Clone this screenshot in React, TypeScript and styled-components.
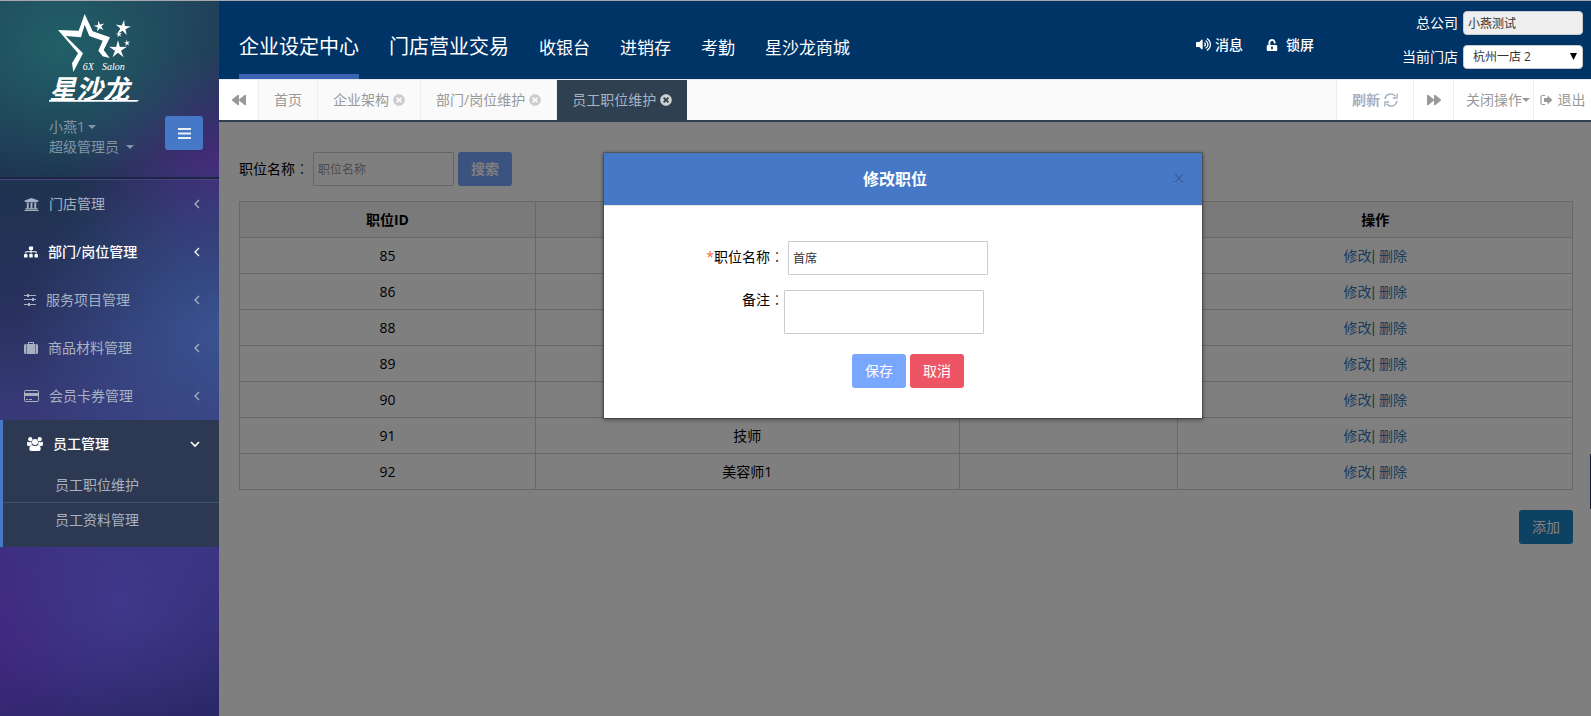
import React from 'react';
import styled, { createGlobalStyle, css } from 'styled-components';
import { FaBackward, FaForward, FaTimesCircle, FaVolumeUp, FaUnlockAlt, FaUniversity, FaSitemap } from 'react-icons/fa';

const GlobalStyle = createGlobalStyle`
  * { box-sizing: border-box; }
  body {
    margin: 0;
    font-family: 'Open Sans', 'Noto Sans CJK SC', sans-serif;
    font-size: 14px;
    line-height: 20px;
    color: #000;
    background: #fff;
  }
  button, input, select, textarea { font: inherit; }
  a { text-decoration: none; }
  svg { display: block; flex: none; }
`;

const Page = styled.div`
  display: flex;
  min-height: 100vh;
  border-top: 1px solid #a6a8ab;
`;

/* ---------- sidebar ---------- */

const Sidebar = styled.aside`
  width: 219px;
  flex: none;
  background:
    radial-gradient(ellipse 200px 180px at 100% 46%, rgba(60, 86, 152, 0.9), rgba(60, 86, 152, 0) 100%),
    radial-gradient(ellipse 140px 130px at 55% 84%, rgba(66, 58, 142, 0.8), rgba(66, 58, 142, 0) 100%),
    radial-gradient(ellipse 150px 120px at 100% 23%, rgba(76, 40, 128, 0.85), rgba(76, 40, 128, 0) 100%),
    radial-gradient(ellipse 150px 160px at 0% 88%, rgba(68, 38, 130, 0.8), rgba(68, 38, 130, 0) 100%),
    linear-gradient(180deg, #21405a 0%, #1e3450 25%, #28305c 42%, #383a78 58%, #3a3482 75%, #2b2868 100%);
`;

const Profile = styled.div`
  padding: 7px 16px 20px 44px;
  border-bottom: 2px solid #1d2447;
  background:
    radial-gradient(ellipse 170px 140px at 28% 26%, rgba(33, 98, 104, 0.95), rgba(33, 98, 104, 0) 100%);
`;

const Account = styled.div`
  display: flex;
  justify-content: space-between;
  align-items: flex-start;
  padding: 10px 0 0 5px;
`;

const AccountLinks = styled.div`
  display: flex;
  flex-direction: column;
  align-items: flex-start;
  padding-top: 1px;
`;

const AccountLink = styled.a<{ $gap: number }>`
  display: flex;
  align-items: center;
  gap: ${p => p.$gap}px;
  color: #8095a8;
`;

const Caret = styled.span`
  border: 4px solid transparent;
  border-top-color: currentColor;
  border-bottom: 0;
`;

const MenuButton = styled.button`
  display: grid;
  place-items: center;
  width: 38px;
  height: 34px;
  padding: 0;
  border: 0;
  border-radius: 3px;
  color: #e8eefa;
  background: #4678c8;
`;

const Menu = styled.nav`
  border-top: 1px solid #44477a;
`;

const MenuGroup = styled.div<{ $open?: boolean }>`
  ${p => p.$open && css`
    padding-bottom: 10px;
    border-left: 3px solid #4678c8;
    background: #2d3953;
  `}
`;

const MenuLink = styled.a<{ $bright?: boolean }>`
  display: flex;
  align-items: center;
  gap: 10px;
  height: 48px;
  padding: 0 19px 0 24px;
  color: ${p => (p.$bright ? '#fff' : '#a7b1c2')};
  font-weight: ${p => (p.$bright ? 500 : 400)};
  & > :last-child { margin-left: auto; }
`;

const SubLink = styled.a`
  display: block;
  padding: 7px 0 7px 52px;
  color: #a7b1c2;
  & + & { border-top: 1px solid #40506a; }
`;

/* ---------- header ---------- */

const Main = styled.div`
  flex: 1;
  min-width: 0;
  display: flex;
  flex-direction: column;
`;

const Header = styled.header`
  display: flex;
  justify-content: space-between;
  padding: 0 8px 0 20px;
  background: #003366;
`;

const TopNav = styled.nav`
  display: flex;
  align-items: flex-end;
  gap: 30px;
`;

const TopLink = styled.a<{ $large?: boolean; $active?: boolean }>`
  padding-bottom: ${p => (p.$large ? 14 : 13)}px;
  border-bottom: 5px solid ${p => (p.$active ? '#3c64b4' : 'transparent')};
  color: #fff;
  font-size: ${p => (p.$large ? 20 : 17)}px;
  line-height: 26px;
  white-space: nowrap;
`;

const HeaderSide = styled.div`
  display: flex;
  gap: 88px;
`;

const Tools = styled.div`
  display: flex;
  gap: 23px;
  align-items: center;
  padding: 9px 0 0;
`;

const Tool = styled.a<{ $gap: number }>`
  display: flex;
  align-items: center;
  gap: ${p => p.$gap}px;
  color: #fff;
  font-weight: 500;
  white-space: nowrap;
`;

const Company = styled.div`
  display: grid;
  grid-template-columns: auto 120px;
  gap: 10px 5px;
  align-items: center;
  justify-items: end;
  padding: 10px 0;
  color: #fff;
`;

const companyField = css`
  width: 120px;
  height: 24px;
  border: 1px solid #c8ccd2;
  border-radius: 4px;
  font-size: 12px;
  line-height: 16px;
  color: #333;
`;

const CompanyInput = styled.input`
  ${companyField}
  padding: 2px 4px;
  background: #eee;
`;

const SelectBox = styled.span`
  position: relative;
  display: flex;
  svg { position: absolute; right: 6px; top: 8px; }
`;

const CompanySelect = styled.select`
  ${companyField}
  appearance: none;
  padding: 2px 9px;
  background: #fff;
`;

/* ---------- tab strip ---------- */

const TabBar = styled.div`
  display: flex;
  height: 43px;
  border-top: 1px solid #e7eaec;
  border-bottom: 2px solid #2f4050;
  background: #fafafa;
`;

const TabList = styled.div`
  display: flex;
  flex: 1;
  min-width: 0;
`;

const Tab = styled.div<{ $active?: boolean }>`
  display: flex;
  align-items: center;
  gap: 4px;
  padding: 0 15px;
  border-right: ${p => (p.$active ? 0 : 1)}px solid #eee;
  color: ${p => (p.$active ? '#a7b1c2' : '#999')};
  background: ${p => (p.$active ? '#2f4050' : 'transparent')};
  white-space: nowrap;
  a { color: inherit; }
`;

const TabClose = styled.button<{ $active?: boolean }>`
  padding: 0;
  border: 0;
  background: none;
  color: ${p => (p.$active ? '#d0d0d0' : '#ccc')};
`;

const BarButton = styled.button<{ $width: number; $gap?: number; $bold?: boolean; $side?: 'right'; $end?: boolean }>`
  display: flex;
  align-items: center;
  justify-content: ${p => (p.$end ? 'flex-end' : 'center')};
  gap: ${p => p.$gap ?? 0}px;
  width: ${p => p.$width}px;
  padding: 0 ${p => (p.$end ? 3 : 0)}px 0 0;
  border: 0 solid #eee;
  border-width: ${p => (p.$side ? '0 1px 0 0' : '0 0 0 1px')};
  background: #fff;
  color: ${p => (p.$bold ? '#a7b1c2' : '#999')};
  font-weight: ${p => (p.$bold ? 700 : 400)};
  white-space: nowrap;
`;

/* ---------- content ---------- */

const Content = styled.main`
  position: relative;
  flex: 1;
  padding: 30px 18px 30px 20px;
`;

const SearchForm = styled.form`
  display: flex;
  align-items: center;
  gap: 4px;
  margin-bottom: 15px;
`;

const Colon = styled.span`
  font-family: 'Noto Sans CJK JP', sans-serif;
  font-weight: 300;
  line-height: 1;
`;

const fieldStyle = css`
  border: 1px solid #ccc;
  border-radius: 1px;
  padding: 6px 4px;
  font-size: 12px;
  color: #333;
  background: #fff;
`;

const SearchInput = styled.input`
  ${fieldStyle}
  width: 141px;
  height: 34px;
  &::placeholder { color: #999; opacity: 1; }
`;

const Button = styled.button<{ $color: string; $bold?: boolean }>`
  width: 54px;
  height: 34px;
  padding: 0;
  border: 0;
  border-radius: 3px;
  color: #fff;
  background: ${p => p.$color};
  font-weight: ${p => (p.$bold ? 700 : 400)};
`;

const Table = styled.table`
  width: 100%;
  border-collapse: collapse;
  table-layout: fixed;
  text-align: center;
  th, td { height: 36px; padding: 0; border: 1px solid #d0d0d0; }
  th { background: #f5f5f6; font-weight: 700; }
  td a { color: #337ab7; }
`;

const Col = styled.col<{ $share: number }>`
  width: ${p => p.$share}%;
`;

const RowActions = styled.td`
  font-family: 'Liberation Sans', 'Noto Sans CJK SC', sans-serif;
  color: #676a6c;
`;

const Footer = styled.div`
  display: flex;
  justify-content: flex-end;
  padding-top: 20px;
`;

/* ---------- dialog ---------- */

const Backdrop = styled.div`
  position: absolute;
  inset: 0;
  display: flex;
  justify-content: center;
  align-items: flex-start;
  padding: 30px 4px 0 0;
  background: rgba(0, 0, 0, 0.5);
`;

const Dialog = styled.section`
  width: 600px;
  border: 1px solid rgba(0, 0, 0, 0.2);
  background: #fff;
  background-clip: padding-box;
  box-shadow: 0 1px 4px rgba(0, 0, 0, 0.4);
`;

const DialogHeader = styled.div`
  display: flex;
  align-items: center;
  padding: 13px 15px;
  border-bottom: 1px solid #e5e5e5;
  background: #4678c8;
`;

const DialogTitle = styled.h4`
  flex: 1;
  margin: 0;
  color: #fff;
  font-size: 16px;
  line-height: 26px;
  text-align: center;
`;

const DialogClose = styled.button`
  display: grid;
  place-items: center;
  width: 16px;
  padding: 0;
  border: 0;
  background: none;
  color: #3860a0;
`;

const DialogForm = styled.form`
  padding: 35px 0 30px;
`;

const FormRow = styled.div<{ $inset?: boolean }>`
  display: flex;
  align-items: flex-start;
  gap: ${p => (p.$inset ? 4 : 0)}px;
  margin-bottom: ${p => (p.$inset ? 15 : 20)}px;
  label {
    width: 180px;
    padding-top: ${p => (p.$inset ? 6 : 0)}px;
    text-align: right;
  }
`;

const Required = styled.span`
  color: #f64;
`;

const NameInput = styled.input`
  ${fieldStyle}
  width: 200px;
  height: 34px;
`;

const NoteArea = styled.textarea`
  ${fieldStyle}
  width: 200px;
  height: 44px;
  resize: none;
`;

const Actions = styled.div`
  display: flex;
  gap: 4px;
  padding-left: 248px;
`;

const SideHandle = styled.div`
  position: absolute;
  right: 0;
  top: 332px;
  width: 1px;
  height: 55px;
  background: #1c1c30;
`;

/* ---------- drawings ---------- */

const starPoints = (cx: number, cy: number, r: number, turn: number) =>
  Array.from({ length: 10 }, (_, i) => {
    const a = ((i * 36 - 90 + turn) * Math.PI) / 180;
    const d = i % 2 ? r * 0.34 : r;
    return `${(cx + d * Math.cos(a)).toFixed(1)},${(cy + d * Math.sin(a)).toFixed(1)}`;
  }).join(' ');

const Logo = () => (
  <svg width="100" height="98" viewBox="132 24 300 294" fill="#fff" role="img" aria-label="6X Salon">
    <path d="M174 90L236 92L254 42L278 94L330 112L311 150L329 174L308 169L295 152L308 122L268 108L254 74L243 112L197 108L249 160L220 216L216 190L234 160Z" />
    <polygon points={starPoints(298, 79, 17, -12)} />
    <polygon points={starPoints(369, 84, 24, 8)} />
    <polygon points={starPoints(357, 103, 10, -8)} />
    <polygon points={starPoints(381, 129, 10, -8)} />
    <polygon points={starPoints(354, 149, 28, 0)} />
    <text x="248" y="210" fontSize="30" fontStyle="italic" fontFamily="Liberation Serif, serif">6X</text>
    <text x="306" y="210" fontSize="30" fontStyle="italic" fontFamily="Liberation Serif, serif">Salon</text>
    <text x="148" y="298" fontSize="80" fontWeight="700" fontStyle="italic" fontFamily="Liberation Sans, Noto Sans CJK SC, sans-serif">星沙龙</text>
    <path d="M147 300H417L411 305H147Z" />
  </svg>
);

const SlidersIcon = () => (
  <svg width="12" height="14" viewBox="0 0 12 14" fill="currentColor">
    <path d="M0 2h2v1H0zM6 2h6v1H6zM0 6h7v1H0zM11 6h1v1h-1zM0 11h3v1H0zM7 11h5v1H7z" />
    <path d="M3 1h2v3H3zM8 5h2v3H8zM4 10h2v3H4z" />
    <path d="M2 2h4v1H2zM7 6h4v1H7zM3 11h4v1H3z" />
  </svg>
);

const SuitcaseIcon = () => (
  <svg width="14" height="14" viewBox="0 0 14 14" fill="currentColor">
    <path d="M0 4.500Q0 3 1.500 3H2V13H1.500Q0 13 0 11.500zM2.500 3H4V1.700Q4 1 4.700 1H9.300Q10 1 10 1.700V3H11.500V13H2.500zM5 2V3H9V2zM12 3H12.500Q14 3 14 4.500V11.500Q14 13 12.500 13H12z" />
  </svg>
);

const CardIcon = () => (
  <svg width="15" height="14" viewBox="0 0 15 14">
    <rect x="0.500" y="1.500" width="14" height="11" rx="0.800" fill="none" stroke="currentColor" />
    <path d="M1 4H14V7H1zM2 10h2v1H2zM5 10h3v1H5z" fill="currentColor" />
  </svg>
);

const UsersIcon = () => (
  <svg width="16" height="14" viewBox="0 0 16 14" fill="currentColor">
    <circle cx="3.300" cy="2.200" r="2.100" />
    <circle cx="12.700" cy="2.200" r="2.100" />
    <path d="M0.500 4.500Q3 6 4.600 4.200Q4.300 6.600 5 7.500Q3.800 8 3 9H1.600Q0 9 0 7.500Q0 5.500 0.500 4.500zM15.500 4.500Q13 6 11.400 4.200Q11.700 6.600 11 7.500Q12.200 8 13 9H14.400Q16 9 16 7.500Q16 5.500 15.500 4.500z" />
    <circle cx="8" cy="4.900" r="3" />
    <path d="M4.800 8Q8 10 11.200 8Q13.700 8.500 13.700 12Q13.700 14 12 14H4Q2.300 14 2.300 12Q2.300 8.500 4.800 8z" />
  </svg>
);

const Angle = ({ down }: { down?: boolean }) => (
  <svg width={down ? 10 : 6} height="10" viewBox={down ? '0 0 10 10' : '0 0 6 10'} fill="none" stroke="currentColor" strokeWidth={down ? 1.6 : 1.3}>
    <path d={down ? 'M1 3L5 7L9 3' : 'M5 1L1 5L5 9'} />
  </svg>
);

const BarsIcon = () => (
  <svg width="13" height="11" viewBox="0 0 13 11" fill="currentColor">
    <path d="M0 0h13v2H0zM0 4.500h13v2H0zM0 9h13v2H0z" />
  </svg>
);

const RefreshIcon = () => (
  <svg width="14" height="14" viewBox="0 0 14 14" fill="none" stroke="currentColor" strokeWidth="1.500">
    <path d="M1 6Q1.500 2.500 5 1.300Q8.800 0.300 11.500 3.300M13 8Q12.500 11.500 9 12.700Q5.200 13.700 2.500 10.700" />
    <path d="M13.200 0.500V5H8.800M0.800 13.500V9H5.200" strokeWidth="1.300" />
  </svg>
);

const SignOutIcon = () => (
  <svg width="13" height="12" viewBox="0 0 13 12">
    <path d="M5 1.500H2.500Q1 1.500 1 3V9Q1 10.500 2.500 10.500H5" fill="none" stroke="currentColor" strokeWidth="1.200" />
    <path d="M4 4H7.500V1.500L12.500 6L7.500 10.500V8H4z" fill="currentColor" />
  </svg>
);

const CrossIcon = () => (
  <svg width="10" height="12" viewBox="0 0 10 12" fill="none" strokeWidth="1.800">
    <path d="M1 2L9 11M9 2L1 11" stroke="#7c9fd8" strokeWidth="1" />
    <path d="M1 1L9 10M9 1L1 10" stroke="currentColor" />
  </svg>
);

/* ---------- data ---------- */

const menuItems = [
  { label: '门店管理', icon: <FaUniversity size={15} /> },
  { label: '部门/岗位管理', icon: <FaSitemap size={14} />, bright: true },
  { label: '服务项目管理', icon: <SlidersIcon /> },
  { label: '商品材料管理', icon: <SuitcaseIcon /> },
  { label: '会员卡券管理', icon: <CardIcon /> },
];

const topLinks = [
  { label: '企业设定中心', large: true, active: true },
  { label: '门店营业交易', large: true },
  { label: '收银台' },
  { label: '进销存' },
  { label: '考勤' },
  { label: '星沙龙商城' },
];

const tabs = [
  { label: '首页' },
  { label: '企业架构', closable: true },
  { label: '部门/岗位维护', closable: true },
  { label: '员工职位维护', closable: true, active: true },
];

const positions = [
  { id: 85, name: '' },
  { id: 86, name: '' },
  { id: 88, name: '' },
  { id: 89, name: '' },
  { id: 90, name: '' },
  { id: 91, name: '技师' },
  { id: 92, name: '美容师1' },
];

export default function App() {
  return (
    <Page>
      <GlobalStyle />
      <Sidebar>
        <Profile>
          <Logo />
          <Account>
            <AccountLinks>
              <AccountLink href="#" $gap={3}>小燕1<Caret /></AccountLink>
              <AccountLink href="#" $gap={7}>超级管理员<Caret /></AccountLink>
            </AccountLinks>
            <MenuButton type="button"><BarsIcon /></MenuButton>
          </Account>
        </Profile>
        <Menu>
          {menuItems.map(item => (
            <MenuLink key={item.label} href="#" $bright={item.bright}>
              {item.icon}
              <span>{item.label}</span>
              <Angle />
            </MenuLink>
          ))}
          <MenuGroup $open>
            <MenuLink href="#" $bright>
              <UsersIcon />
              <span>员工管理</span>
              <Angle down />
            </MenuLink>
            <SubLink href="#">员工职位维护</SubLink>
            <SubLink href="#">员工资料管理</SubLink>
          </MenuGroup>
        </Menu>
      </Sidebar>

      <Main>
        <Header>
          <TopNav>
            {topLinks.map(l => (
              <TopLink key={l.label} href="#" $large={l.large} $active={l.active}>{l.label}</TopLink>
            ))}
          </TopNav>
          <HeaderSide>
            <Tools>
              <Tool href="#" $gap={4}><FaVolumeUp size={15} />消息</Tool>
              <Tool href="#" $gap={8}><FaUnlockAlt size={12} />锁屏</Tool>
            </Tools>
            <Company>
              <label htmlFor="company">总公司</label>
              <CompanyInput id="company" defaultValue="小燕测试" readOnly />
              <label htmlFor="shop">当前门店</label>
              <SelectBox>
                <CompanySelect id="shop"><option>杭州一店 2</option></CompanySelect>
                <svg width="7" height="7" viewBox="0 0 7 7"><path d="M0 0H7L3.500 7z" /></svg>
              </SelectBox>
            </Company>
          </HeaderSide>
        </Header>

        <TabBar>
          <BarButton type="button" $width={40} $side="right"><FaBackward size={14} /></BarButton>
          <TabList>
            {tabs.map(t => (
              <Tab key={t.label} $active={t.active}>
                <a href="#">{t.label}</a>
                {t.closable && <TabClose type="button" $active={t.active}><FaTimesCircle size={12} /></TabClose>}
              </Tab>
            ))}
          </TabList>
          <BarButton type="button" $width={77} $gap={4} $bold>刷新<RefreshIcon /></BarButton>
          <BarButton type="button" $width={40}><FaForward size={14} /></BarButton>
          <BarButton type="button" $width={80} $end>关闭操作<Caret /></BarButton>
          <BarButton type="button" $width={58} $gap={5}><SignOutIcon />退出</BarButton>
        </TabBar>

        <Content>
          <SearchForm>
            <label htmlFor="search">职位名称<Colon lang="ja">：</Colon></label>
            <SearchInput id="search" placeholder="职位名称" />
            <Button type="button" $color="#79a6ff" $bold>搜索</Button>
          </SearchForm>
          <Table>
            <colgroup>
              <Col $share={22.2} /><Col $share={31.8} /><Col $share={16.4} /><Col $share={29.6} />
            </colgroup>
            <thead>
              <tr><th>职位ID</th><th /><th /><th>操作</th></tr>
            </thead>
            <tbody>
              {positions.map(p => (
                <tr key={p.id}>
                  <td>{p.id}</td>
                  <td>{p.name}</td>
                  <td />
                  <RowActions><a href="#">修改</a>| <a href="#">删除</a></RowActions>
                </tr>
              ))}
            </tbody>
          </Table>
          <Footer><Button type="button" $color="#1c84c6">添加</Button></Footer>

          <Backdrop>
            <Dialog role="dialog" aria-labelledby="dialog-title">
              <DialogHeader>
                <DialogTitle id="dialog-title">修改职位</DialogTitle>
                <DialogClose type="button"><CrossIcon /></DialogClose>
              </DialogHeader>
              <DialogForm>
                <FormRow $inset>
                  <label htmlFor="name"><Required>*</Required>职位名称<Colon lang="ja">：</Colon></label>
                  <NameInput id="name" defaultValue="首席" />
                </FormRow>
                <FormRow>
                  <label htmlFor="note">备注<Colon lang="ja">：</Colon></label>
                  <NoteArea id="note" />
                </FormRow>
                <Actions>
                  <Button type="button" $color="#79a6ff">保存</Button>
                  <Button type="button" $color="#ed5565">取消</Button>
                </Actions>
              </DialogForm>
            </Dialog>
          </Backdrop>
          <SideHandle />
        </Content>
      </Main>
    </Page>
  );
}
